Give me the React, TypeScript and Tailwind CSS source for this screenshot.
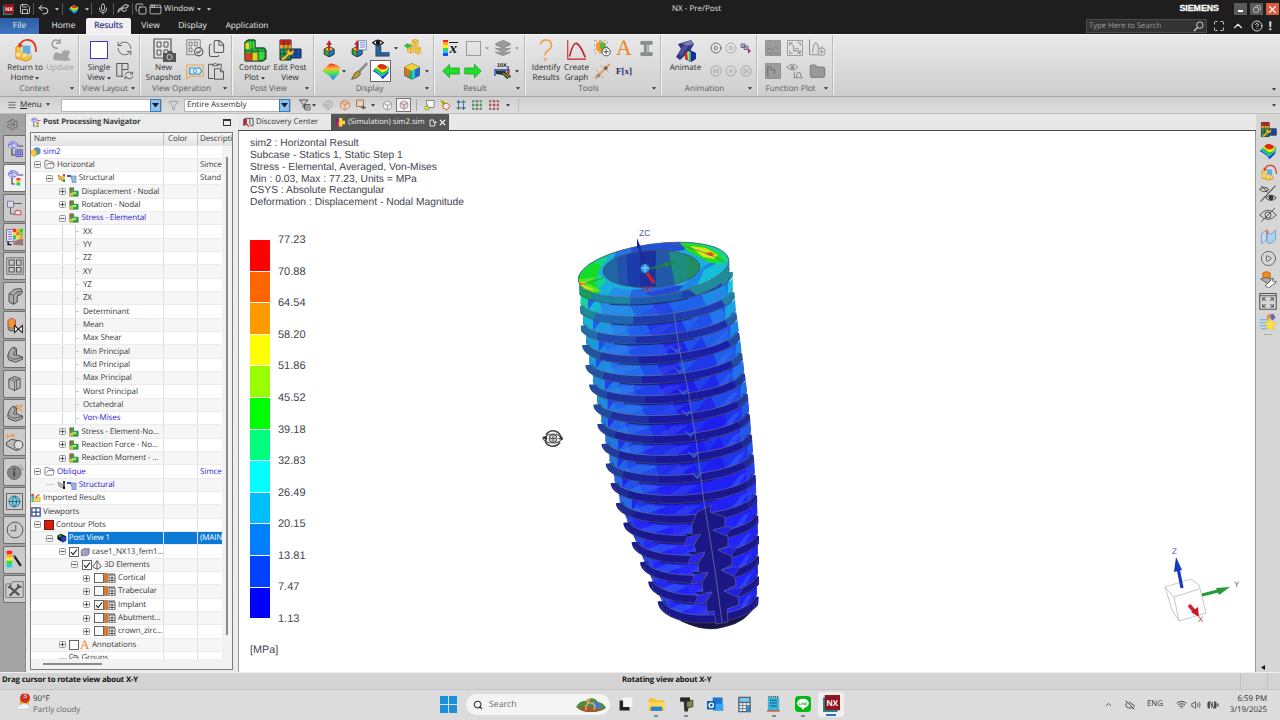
import type { ReactNode } from "react";
import clsx from "clsx";
import {
  Save, Undo2, Mic, Search, Maximize, ChevronUp, CircleHelp, Settings, RefreshCw, Files,
  Layers, CirclePlay, CircleStop, CirclePause, Folder,
  Filter, Wifi, Volume2, Globe, Box, Copy, AppWindow,
  BatteryCharging, CloudOff, Package, Magnet, Pyramid, FolderOpen,
} from "lucide-react";

const RAINBOW = [
  "#ff0000", "#ff6600", "#ff9900", "#ffff00", "#99ff00", "#00ff00",
  "#00ff80", "#00ffff", "#00bfff", "#0080ff", "#0040ff", "#0000ff",
];
const LEVELS = ["77.23", "70.88", "64.54", "58.20", "51.86", "45.52", "39.18", "32.83", "26.49", "20.15", "13.81", "7.47", "1.13"];

/* ---------- small drawings ---------- */

function Svg({ s = 20, children }: { s?: number; children: ReactNode }) {
  return <svg width={s} height={s} viewBox="0 0 24 24" fill="none" className="shrink-0">{children}</svg>;
}

function Caret({ dim = false, light = false }: { dim?: boolean; light?: boolean }) {
  return (
    <svg width="4" height="3" viewBox="0 0 4 3" className="shrink-0">
      <path d="M0 .3h4L2 2.6z" fill={light ? "#ddd" : dim ? "#9a9a9a" : "#222"} />
    </svg>
  );
}

const Contour = ({ s = 20 }: { s?: number }) => (
  <Svg s={s}>
    <path d="M1 12 11 3q6 0 12 5-2 5-1 7l-8 8q-2-5-13-11z" fill="#1a35d8" />
    <path d="M2 11 11 3q6 0 12 5-2 3-1.500 5-5 5-9 7-2-4-10.500-9z" fill="#18c8d8" />
    <path d="M3 10 11 3q6 0 12 5-2 2-1.500 3-4 5-9 6-2-4-9.500-7z" fill="#23c823" />
    <path d="M5 8q3-5 8-5 6 1 9 5-2 5-9 6-2-3-8-6z" fill="#f5e51b" />
    <path d="M7 6q3-4 7-3 5 1 6 4-1 3-7 3-3-1-6-4z" fill="#e32a14" />
  </Svg>
);

const SmoothContour = () => (
  <Svg s={20}>
    <defs>
      <linearGradient id="smooth" x1="0.500" y1="0" x2=".55" y2="1">
        <stop offset="0.050" stopColor="#f33" /><stop offset=".3" stopColor="#fb3" />
        <stop offset=".55" stopColor="#5e4" /><stop offset=".9" stopColor="#28f" />
      </linearGradient>
    </defs>
    <path d="M1 12 11 3q6 0 12 5-2 5-1 7l-8 8q-2-5-13-11z" fill="url(#smooth)" />
  </Svg>
);

const PaintBrush = () => (
  <Svg s={18}>
    <path d="M22 1 11 12l2 2L23 3z" fill="#9a9a9a" stroke="#555" strokeWidth=".8" />
    <path d="M11 12l3 3q-1 6-12 8 2-3 3-6t6-5z" fill="#b59a3c" stroke="#4e4520" />
  </Svg>
);

const ContourPlot = ({ s = 24 }: { s?: number }) => (
  <Svg s={s}>
    <path d="M2 4l3-2h7v8h9l2 2v9l-3 2H2z" fill="#28b83a" stroke="#222" />
    <path d="M2 5h4v6H2z" fill="#f5d020" /><path d="M2 15h7v8H2z" fill="#e8381c" />
    <path d="M7 4h5v6H7z" fill="#4ede38" /><path d="M9 15h6v8H9z" fill="#f5c71c" />
    <path d="M16 12h6v9h-6z" fill="#3ed23e" />
    <path d="M2 13h20M9 4v19M15 11v12M2 22V4l3-2h7v8h10v10l-2 3H2" stroke="#163" strokeWidth=".9" />
  </Svg>
);

const EditPost = ({ s = 24 }: { s?: number }) => (
  <Svg s={s}>
    <path d="M2 2h11v20H2z" fill="#1d9b58" stroke="#223" />
    <path d="M2 2h11v5H2z" fill="#d3241c" /><path d="M2 7h11v4H2z" fill="#e2a722" />
    <path d="M13 11h10v9H13z" fill="#1d4fb8" stroke="#123" />
    <path d="M6 2v20M10 2v20M2 11h11M2 16h21M18 11v9" stroke="#133" strokeWidth=".7" />
    <path d="M3 21l6-5q-1-4 2-5l1 3 2-1v-2q3 2 1 5-2 2-4 1l-6 6z" fill="#f4c430" stroke="#8a5a00" strokeWidth=".7" />
  </Svg>
);

const ReturnHome = ({ s = 24 }: { s?: number }) => (
  <Svg s={s}>
    <path d="M3 9l5-3 4 2v5l6 1v7l-5 2-10-3z" fill="#f7c948" stroke="#d58b12" />
    <path d="M9 7h9v10H9z" fill="#5fb0dc" stroke="#e6eef4" />
    <path d="M3 14h5v5H3zM9 15h5v5H9z" fill="#ffe28a" stroke="#d99a2b" strokeWidth=".6" />
    <path d="M6 8Q9 1 16 2t7 12" stroke="#e0392b" strokeWidth="1.800" />
    <path d="M5 5l1 5 4-2z" fill="#e0392b" />
  </Svg>
);

const Cube = ({ s = 20 }: { s?: number }) => (
  <Svg s={s}>
    <path d="M12 2 22 7v11l-10 5-10-5V7z" fill="#25b35a" stroke="#222" strokeWidth=".7" />
    <path d="M12 2 22 7l-10 5L2 7z" fill="#f6cf2f" /><path d="M2 7l6 3v10l-6-3z" fill="#ee6a1f" />
    <path d="M12 12l10-5v11l-10 5z" fill="#1d68d6" /><path d="M12 12l4-2v11l-4 2z" fill="#23c7c7" />
  </Svg>
);

const ArrowCube = ({ list = false }: { list?: boolean }) => (
  <Svg s={17}>
    <path d="M10 9l7 4v7l-7 4-7-4v-7z" fill="#36a350" stroke="#111" />
    <path d="M10 9l7 4-7 4-7-4z" fill="#f0c52b" stroke="#111" strokeWidth=".7" />
    <path d="M10 17l7-4v7l-7 4z" fill="#2277c8" stroke="#111" strokeWidth=".7" />
    <path d="M10 15V5" stroke="#b3202a" strokeWidth="2.500" /><path d="M10 0l4 7H6z" fill="#c4232e" />
    {list && <><path d="M12 1h11v13H12z" fill="#f4f6ff" stroke="#4660b0" /><path d="M14 4h7M14 7h7M14 10h7" stroke="#4660b0" /></>}
  </Svg>
);

const EyePart = () => (
  <Svg s={18}>
    <path d="M5 9h7v9h11v5H5z" fill="#27619e" stroke="#123" strokeWidth=".6" />
    <path d="M1 5q7-7 14 0-7 7-14 0z" fill="#fff" stroke="#111" strokeWidth="1.500" /><circle cx="8" cy="5" r="3" fill="#111" />
  </Svg>
);

const YellowCubes = () => (
  <Svg s={18}>
    {[[12, 2], [6, 11], [16, 12]].map(([x, y]) => (
      <g key={x} stroke="#c98a14" strokeWidth=".7">
        <path d={`M${x} ${y}l4-2 4 2v6l-4 2-4-2z`} fill="#f7cf4b" /><path d={`M${x} ${y}l4 2 4-2M${x + 4} ${y + 2}v6`} />
      </g>
    ))}
    <path d="M1 9l6-4v2h4v4H7v2z" fill="#39b54a" />
  </Svg>
);

const Snapshot = () => (
  <Svg s={24}>
    <path d="M2 1h17v19H2z" stroke="#555" strokeWidth="1.200" />
    <path d="M5 4h4v5H5zM12 4h4v5h-4zM5 12h4v5H5zM12 12h4v5h-4z" stroke="#555" />
    <path d="M11 15h4l1-2h4l1 2h3v9H11z" fill="#555" /><circle cx="17.500" cy="19" r="2.600" stroke="#ccc" />
  </Svg>
);

const GridCheck = () => (
  <Svg s={18}>
    <path d="M1 1h18v20H1z" stroke="#666" /><path d="M4 4h4v5H4zM11 4h4v5h-4zM4 12h4v5H4z" stroke="#666" />
    <circle cx="17" cy="17" r="5.500" fill="#ddd" stroke="#555" strokeWidth="1.500" /><path d="M14 17l2 2 4-4" stroke="#555" strokeWidth="1.500" />
  </Svg>
);

const PhotoTag = () => (
  <Svg s={18}>
    <path d="M1 4h22v15H7l-6 3z" stroke="#f0a35a" strokeWidth="1.500" />
    <path d="M5 8h13l3 4-3 4H5z" fill="#def" stroke="#2a91b9" strokeWidth="1.500" /><circle cx="12" cy="12" r="2.300" stroke="#2a91b9" />
  </Svg>
);

const PasteIcon = () => (
  <Svg s={18}>
    <path d="M8 3H2v19h7M14 3h5v5" stroke="#555" strokeWidth="1.300" /><path d="M7 5V3h2q2-3 4 0h2v2z" stroke="#555" strokeWidth="1.200" />
    <path d="M10 9h8l4 4v10H10zM18 9v4h4" stroke="#555" strokeWidth="1.300" />
  </Svg>
);

const LayoutSync = () => (
  <Svg s={18}>
    <path d="M1 2h15v8M1 2v17h9M8 2v17M8 10h8" stroke="#555" strokeWidth="1.300" />
    <path d="M12 17q2-5 8-3l2 2M22 13v3h-3M23 19q-3 5-8 3l-2-2M12 23v-3h3" stroke="#555" strokeWidth="1.300" />
  </Svg>
);

const ColorbarX = () => (
  <div className="flex h-[17px] w-[17px] items-start gap-px">
    <div className="flex w-[5px] flex-col">
      {["#f22", "#fa2", "#fe2", "#3d3", "#2cd", "#24f"].map((c) => <div key={c} className="h-[2.700px]" style={{ backgroundColor: c }} />)}
    </div>
    <span className="mt-[2px] border-t border-[#222] px-px font-['Liberation_Serif'] text-[15px] font-bold italic leading-[13px] text-[#111]">x</span>
  </div>
);

const GreenArrow = ({ flip = false }: { flip?: boolean }) => (
  <Svg s={18}><path d={flip ? "M23 12 14 3v5H1v8h13v5z" : "M1 12l9-9v5h13v8H10v5z"} fill="#22dd2c" stroke="#159c20" /></Svg>
);

const TenX = () => (
  <svg width="20" height="20" viewBox="0 0 20 20" className="shrink-0">
    <text x="4" y="5.500" className="font-['Liberation_Sans'] text-[5.500px] font-bold" fill="#111">10X</text>
    <path d="M2 8v7M2 9h13M15 5v8" stroke="#24a" strokeWidth="1.300" />
    <path d="M3 10h9q4 1 6 6l-4 2-4-4-7-1z" fill="#26352e" /><path d="M10 12l6 5M13 11l3 4" stroke="#dfc32b" /><path d="M16 8v4" stroke="#d22" strokeWidth="1.500" />
  </svg>
);

const Question = () => (
  <Svg s={22}>
    <path d="M6 6q1-5 6-5 6 0 6 6 0 3-3 5-4 2-4 6" stroke="#f39a44" strokeWidth="1.700" /><path d="M10 21h2.500v2.500H10z" fill="#f39a44" />
  </Svg>
);

const Graph = () => (
  <Svg s={21}><path d="M2 1v22h21" stroke="#c8202a" strokeWidth="1.200" /><path d="M4 20Q8 4 12 5t10 16" stroke="#c8202a" strokeWidth="1.800" /></Svg>
);

const PickPlus = () => (
  <Svg s={18}>
    <path d="M2 2h17v17H2z" stroke="#999" strokeDasharray="3 3" /><path d="M4 6l6-4 7 4v8l-7 5-6-5z" fill="#f29a2b" />
    <path d="M9 6l5-2 3 3v5l-5 3-3-4z" fill="#55b848" /><circle cx="17.500" cy="17" r="5.500" fill="#fff" stroke="#222" /><path d="M17.500 13.500v7M14 17h7" stroke="#222" />
  </Svg>
);

const Ruler = () => (
  <Svg s={18}>
    <path d="M3 22 22 3" stroke="#f08a34" strokeWidth="3" strokeDasharray="2.500 1" /><path d="M4 10l10 11M10 4l11 10" stroke="#e98a3c" />
    <circle cx="17" cy="8" r="2.500" fill="#666" /><circle cx="7" cy="18" r="2.500" fill="#888" />
  </Svg>
);

const IBeam = () => (
  <Svg s={17}><path d="M4 2h16v4h-5v12h5v4H4v-4h5V6H4z" fill="#8a8f8d" stroke="#70807a" /><path d="M12 6l3 1v10l-3 1z" fill="#bbb" /></Svg>
);

const Animate = () => (
  <Svg s={24}>
    <path d="M4 6 17 2l3 4-4 7-10 9-4-3 5-8z" fill="#33337e" /><path d="M8 6l9-4 3 4-6 2z" fill="#7b7bb4" />
    <path d="M4 16l5-8 6-1-7 11z" fill="#4f509b" />
    <path d="M11 15l5-3 6 3v6l-5 3-6-3z" fill="#182a98" /><path d="M11 15l3-1v8l-3-2z" fill="#e8262a" />
    <path d="M13 14l2-1 1 10-2-1z" fill="#e9d727" /><path d="M15 13l2 1v9h-2z" fill="#25b6a6" />
  </Svg>
);

const FilledPlot = ({ kind = 0 }: { kind?: number }) => (
  <Svg s={18}>
    <path d="M2 2h20v20H2z" fill={kind === 1 ? "none" : "#9b9b9b"} stroke="#868686" />
    {kind === 0 && <path d="M4 15l4-3 4 3 3-4 5 2M4 19h16" stroke="#777" />}
    {kind === 1 && <path d="M5 9V5h4M15 5h4v4M19 15v4h-4M9 19H5v-4M5 5l5 4M19 19l-4-4M10 9v7h8M12 15q0-4 5-2" stroke="#868686" strokeWidth="1.200" />}
    {kind === 2 && <path d="M5 5v14M5 7h6M8 10h6v6" stroke="#6f6f6f" strokeWidth="1.400" />}
  </Svg>
);

const CurvePlus = () => (
  <Svg s={18}>
    <path d="M2 1v20h20M6 18Q8 3 11 5t3 13M14 18q2-8 6-8" stroke="#8b8b8b" strokeWidth="1.300" />
    <circle cx="18" cy="17" r="5" fill="#ddd" stroke="#8b8b8b" /><path d="M18 14v6M15 17h6" stroke="#8b8b8b" />
  </Svg>
);

const EyeCurve = () => (
  <Svg s={18}>
    <path d="M1 7q8-8 15 0-7 7-15 0z" stroke="#8b8b8b" strokeWidth="1.300" /><circle cx="8.500" cy="7" r="2.500" fill="#8b8b8b" />
    <path d="M11 13v8h12M14 20q0-6 3-6t3 6" stroke="#8b8b8b" strokeWidth="1.400" />
  </Svg>
);

const UpdateIcon = () => (
  <Svg s={24}>
    <path d="M11 3Q5 0 4 6q1 5 6 4M12 1v4H8" stroke="#9b9b9b" strokeWidth="1.500" />
    <path d="M6 22q-2-5 2-8l5 2 3-4 4 1v-2l2 3-2 5 3 3-5 1z" fill="#a5a5a5" />
  </Svg>
);

const GeoMesh = ({ color = false, s = 18 }: { color?: boolean; s?: number }) => (
  <Svg s={s}>
    <path d="M3 7q1-5 6-5t7 4q-1 4-6 5T3 7zM3 7q6-4 13-1M8 2q-3 4 2 9" fill="#d4d4fb" stroke="#6d6dd8" strokeWidth="1.200" />
    <path d="M8 12v8h4M16 8h7" stroke="#444" strokeWidth="1.600" />
    {color ? <><path d="M14 12h5v4h-5z" fill="#f33" /><path d="M14 15h5v3h-5z" fill="#fd2" /><path d="M14 18h5v4h-5z" fill="#2c6" /></>
      : <path d="M13 13h9v9h-9zM16 13v9M19 13v9M13 16h9M13 19h9" stroke="#5252c8" strokeWidth="1.200" />}
  </Svg>
);

const HeatGrid = () => (
  <Svg s={19}>
    <path d="M2 2h9v15H2z" fill="#eef" stroke="#557" /><path d="M4 5h5M4 8h5M4 11h5M4 14h5" stroke="#44c" />
    {["#f22", "#fa1", "#3c2", "#fd2", "#f62", "#6d2", "#2c5", "#ee2", "#f93"].map((c, i) => (
      <rect key={c + i} x={10 + (i % 3) * 4.3} y={1 + Math.floor(i / 3) * 4.3} width="4" height="4" fill={c} />
    ))}
    <path d="M10 21q2-7 13-7v8z" fill="#9c7777" /><path d="M4 17v4h4" stroke="#111" strokeWidth="1.800" />
  </Svg>
);

const FourViews = () => (
  <Svg s={18}><path d="M1 1h22v22H1z" stroke="#666" strokeWidth="1.200" /><path d="M4 4h7v7H4zM14 4h6v7h-6zM4 14h7v6H4zM14 14h6v6h-6z" stroke="#555" strokeWidth="1.400" /></Svg>
);

const Bracket = () => (
  <Svg s={18}>
    <path d="M4 9l7-6 9-1 2 4-2 4-5 2v8l-5 3-6-3z" fill="#aaa" stroke="#444" strokeWidth="1.200" />
    <path d="M4 9l6 2v12M10 11l5-5 6 0" stroke="#444" /><circle cx="16" cy="8" r="1.500" fill="#eee" stroke="#555" />
  </Svg>
);

const Elbow = ({ dots = false }: { dots?: boolean }) => (
  <Svg s={18}>
    <path d="M3 12Q6 3 11 3l3 2v8l8 3v3l-9 4-9-3q-3-4-1-8z" fill="#aaa" stroke="#444" strokeWidth="1.200" />
    <path d="M3 14q3 5 9 5l10-3M11 3q3 5-1 10l4 1" stroke="#444" />
    {dots && <path d="M13 2l9 8M21 2l-7 8M13 2h9" stroke="#f39334" strokeWidth="1.600" strokeDasharray="3 1" />}
  </Svg>
);

const CylMesh = () => (
  <Svg s={19}>
    <path d="M4 6v11q5 4 9 0V6z" fill="#9d9d9d" stroke="#444" /><path d="M4 5q5-4 9 0v9q-5 3-9 0z" fill="#f59530" stroke="#a55" />
    <path d="M12 12l10 9v-9l-10 9z" fill="#fff" stroke="#222" strokeWidth="1.300" />
  </Svg>
);

const Brackets = () => (
  <Svg s={17}><path d="M4 6l8-4 8 3v13l-8 4-8-4z" fill="#bbb" stroke="#444" strokeWidth="1.200" /><path d="M4 6l8 3v13M12 9l8-4M8 4l8 3M15 8v12" stroke="#444" /></Svg>
);

const Rings = () => (
  <Svg s={19}>
    <path d="M2 12l6-4 10 2v11l-4 1-12-6z" fill="#bbb" stroke="#444" strokeWidth="1.200" /><circle cx="17" cy="15" r="5.500" fill="#ddd" stroke="#444" strokeWidth="1.200" />
    <path d="M3 5l8-3M3 2v5M11 1v5" stroke="#f39334" strokeWidth="1.500" />
  </Svg>
);

const TreeLinks = () => (
  <Svg s={18}>
    <path d="M2 3h8v8H2z" fill="#dde" stroke="#669" /><path d="M10 6h11M6 11v9h5M11 20h3" stroke="#555" strokeWidth="1.200" />
    <path d="M12 21q-1-6 4-6t4 6z" stroke="#c55" strokeWidth="1.400" fill="#f7dede" />
  </Svg>
);

const InfoBall = () => (
  <Svg s={18}>
    <circle cx="11" cy="13" r="9" fill="#858585" stroke="#555" /><path d="M11 11v7M11 7v2.500" stroke="#444" strokeWidth="2.500" />
    <path d="M18 2q5 2 5 8M17 5q3 1 4 5" stroke="#888" />
  </Svg>
);

const ClockFace = () => <Svg s={18}><circle cx="12" cy="12" r="10.500" stroke="#555" strokeWidth="1.300" /><path d="M13 5v8H6" stroke="#555" strokeWidth="1.300" /></Svg>;

const BarBrush = () => (
  <Svg s={19}>
    {["#f22", "#fa2", "#fe2", "#3d3", "#2cd"].map((c, i) => <rect key={c} x="2" y={1 + i * 4.2} width="7" height="4.200" fill={c} />)}
    <path d="M12 8l8 12" stroke="#222" strokeWidth="3" /><path d="M10 6l3 1-1 3z" fill="#555" />
  </Svg>
);

const Toolbox = () => (
  <Svg s={19}>
    <path d="M1 5h7l2-3h13v20H1z" stroke="#666" /><path d="M5 8l13 11M19 7 6 20" stroke="#555" strokeWidth="2.800" />
    <path d="M4 10l4-4M16 5l1 4 4 0" stroke="#555" strokeWidth="2" />
  </Svg>
);

const DotGrid = ({ red = true }: { red?: boolean }) => (
  <Svg s={12}>
    <path d="M4 4h16v16H4zM12 4v16M4 12h16" stroke={red ? "#977" : "#3a6"} strokeWidth="1.500" />
    {[4, 12, 20].map((x) => [4, 12, 20].map((y) => <rect key={`${x}-${y}`} x={x - 1.5} y={y - 1.5} width="3" height="3" fill={red || x === 12 ? "#b3242b" : "#3f7a55"} />))}
  </Svg>
);

const Swoosh = () => (
  <Svg s={12}><path d="M2 2h8l4 8-8 3z" fill="#f6d537" /><path d="M2 2l8 4 4 4-4 2z" fill="#35b44a" /><path d="M8 12q8-8 14 2l-6 8-8-4z" fill="#f2ede8" stroke="#e2592b" strokeWidth="2" /></Svg>
);

const FourDots = () => (
  <Svg s={12}><path d="M3 6h18M3 18h18M7 2v20M17 2v20" stroke="#334e9c" strokeWidth="1.500" /><path d="M5 4h4v4H5zM15 16h4v4h-4z" fill="#26a" /><path d="M15 4h4v4h-4zM5 16h4v4H5z" fill="#3a9b52" /></Svg>
);

const SquareTarget = () => (
  <Svg s={12}><path d="M3 2h14v13H3z" stroke="#c9702c" strokeWidth="2" /><path d="M17 12v9M12 17h10" stroke="#555" strokeWidth="2.500" /></Svg>
);

const StarBadge = () => (
  <Svg s={18}>
    <path d="M1 9h12M1 13h9M1 17h9M3 21h8" stroke="#7fbbe8" strokeWidth="2.200" /><path d="M11 3l8-2 3 5-4 4z" fill="#6a5fc0" /><circle cx="13" cy="5" r="3" fill="#f0913a" />
    <path d="M15 7l2.500 5 5.500 1-4 4 1 6-5-3-5 3 1-6-4-4 5.500-1z" fill="#ffe14a" stroke="#e3b520" strokeWidth=".7" />
  </Svg>
);

const Panels = () => (
  <Svg s={17}><path d="M2 8l7-5v14l-7 5z" fill="#c9d6f4" stroke="#7287bd" /><path d="M10 7l5 2 7-6v13l-7 6-5-2z" fill="#a9d3f5" stroke="#6c87b8" /><path d="M9 1l4 5-4 3z" fill="#d68446" /></Svg>
);

const OrangeTool = () => (
  <Svg s={18}><path d="M5 4q5-4 10 0v6q-5 3-10 0z" fill="#f58b22" stroke="#b35c0c" /><path d="M2 12l8-2 9 3-8 5z" fill="#aaa" stroke="#555" /><path d="M8 21l7-6q0-4 4-4l-1 3 2 2 3-1q0 4-4 4l-6 5z" fill="#fff" stroke="#444" /></Svg>
);

const FitWindow = () => (
  <Svg s={18}><path d="M1 2h22v21H1zM1 5h22" stroke="#555" strokeWidth="1.400" /><path d="M5 12V8h4M15 8h4v4M19 16v4h-4M9 20H5v-4M5 8l4 4M19 8l-4 4M19 20l-4-4M5 20l4-4" stroke="#444" strokeWidth="1.300" /></Svg>
);

const HideSwap = () => (
  <Svg s={18}>
    <path d="M1 6q6-6 12 0-6 6-12 0zM3 1l9 9" stroke="#555" strokeWidth="1.400" /><path d="M2 22 22 1" stroke="#444" strokeWidth="1.400" />
    <path d="M9 17q7-7 14 0-7 7-14 0z" stroke="#444" strokeWidth="1.300" /><circle cx="16" cy="17" r="3.200" fill="#333" />
  </Svg>
);

const HideEye = () => (
  <Svg s={18}><path d="M1 12q11-13 22 0-11 12-22 0z" stroke="#555" strokeWidth="1.300" /><circle cx="12" cy="12" r="4" stroke="#555" strokeWidth="1.300" /><path d="M3 21 21 3" stroke="#555" strokeWidth="1.300" /></Svg>
);

const NxLogo = ({ s = 11 }: { s?: number }) => (
  <svg width={s} height={s} viewBox="0 0 20 20" className="shrink-0">
    <path d="M0 3h17v17H0z" fill="#1d8f8c" /><path d="M2 0h18v18H2z" fill="#8f1620" />
    <text x="4" y="13" className="font-['Liberation_Sans'] text-[10px] font-bold" fill="#fff">NX</text>
  </svg>
);

/* ---------- title bar + tabs ---------- */

const Sep = () => <div className="h-3 w-px shrink-0 bg-[#555]" />;

function TitleBar() {
  return (
    <div className="flex h-[18px] items-center bg-[#1e1e1e] text-[#e2e2e2]">
      <div className="flex w-[16px] justify-center"><NxLogo s={11} /></div>
      <div className="flex w-[17px] justify-center"><Save size={12} strokeWidth={1.6} /></div>
      <Sep />
      <div className="flex w-[18px] justify-center"><Undo2 size={13} strokeWidth={1.8} /></div>
      <div className="flex w-[10px] justify-center"><Caret light /></div>
      <Sep />
      <div className="flex w-[20px] justify-center"><Contour s={11} /></div>
      <div className="flex w-[8px] justify-center"><Caret light /></div>
      <Sep />
      <div className="flex w-[21px] justify-center"><Mic size={12} strokeWidth={1.6} /></div>
      <Sep />
      <div className="flex w-[18px] justify-center">
        <Svg s={12}><path d="M2 16q2-7 8-6h8q4 0 5-5-5-3-10 0t-3 10q5 5 10-2M1 19l7-6" stroke="#ddd" strokeWidth="2" /></Svg>
      </div>
      <Sep />
      <div className="flex w-[15px] justify-center"><Copy size={12} strokeWidth={1.6} /></div>
      <div className="flex w-[15px] justify-center"><AppWindow size={13} strokeWidth={1.4} /></div>
      <span className="w-[33px] pl-px text-[8px]">Window</span>
      <div className="flex w-[6px] justify-center"><Caret light /></div>
      <div className="flex w-[14px] justify-center"><Caret light /></div>
      <span className="ml-[456px] w-[60px] text-[8px]">NX - Pre/Post</span>
      <span className="ml-auto mr-[15px] font-['Liberation_Sans'] text-[8.800px] font-bold text-white [-webkit-text-stroke:0.300px_white]">SIEMENS</span>
      <div className="flex gap-[3px] pr-[1px]">
        <div className="flex h-[12px] w-[13px] items-end justify-center bg-[#5a5a5a] pb-[3px]"><div className="h-[2px] w-[5px] bg-white" /></div>
        <div className="flex h-[12px] w-[13px] items-center justify-center bg-[#5a5a5a]"><Copy size={8} className="-scale-x-100" /></div>
        <div className="flex h-[12px] w-[13px] items-center justify-center bg-[#dc5a3e]">
          <Svg s={9}><path d="M3 3l18 18M21 3 3 21" stroke="#fff" strokeWidth="3.500" /></Svg>
        </div>
      </div>
    </div>
  );
}

function RibbonTabs() {
  return (
    <div className="flex h-[16px] items-stretch bg-[#1e1e1e] text-[8.500px] leading-[16px] text-[#e8e8e8]">
      <div className="w-[39px] bg-gradient-to-b from-[#2c5ea4] to-[#3f76bf] text-center">File</div>
      <div className="w-[47px] pl-[2px] text-center">Home</div>
      <div className="w-[45px] rounded-t-[2px] bg-[#f1f1f4] text-center text-[#27277c] [-webkit-text-stroke:0.2px_#27277c]">Results</div>
      <div className="w-[39px] text-center">View</div>
      <div className="w-[45px] text-center">Display</div>
      <div className="w-[64px] text-center text-[8.200px]">Application</div>
      <div className="ml-auto flex h-[14px] w-[121px] items-center justify-between self-center border border-[#4c4c4c] bg-[#333] px-[2px] text-[7.700px] text-[#9d9d9d]">
        <span>Type Here to Search</span>
        <Svg s={11}><circle cx="15" cy="9" r="7" stroke="#ddd" strokeWidth="2" /><path d="M10 14l-8 8" stroke="#ddd" strokeWidth="2.800" /></Svg>
      </div>
      <div className="flex w-[73px] items-center justify-between pl-[6px] pr-[8px]">
        <Maximize size={12} strokeWidth={1.8} />
        <ChevronUp size={14} strokeWidth={2} />
        <CircleHelp size={12} strokeWidth={1.8} />
        <span className="text-[12px] font-bold leading-none">!</span>
      </div>
    </div>
  );
}

/* ---------- ribbon ---------- */

function Big({ className, icon, lines, dim }: { className: string; icon: ReactNode; lines: ReactNode[]; dim?: boolean }) {
  return (
    <div className={clsx("flex shrink-0 flex-col items-center", className, dim && "text-[#a2a2a2]")}>
      <div className="flex h-[27px] items-center justify-center">{icon}</div>
      {lines.map((l, i) => <div key={i} className="flex h-[10px] items-center gap-[2px] whitespace-nowrap leading-[10px]">{l}</div>)}
    </div>
  );
}

function Pair({ className, top, bottom }: { className: string; top?: ReactNode; bottom?: ReactNode }) {
  return (
    <div className={clsx("flex shrink-0 flex-col", className)}>
      <div className="flex h-[24px] items-center justify-center">{top}</div>
      <div className="flex h-[22px] items-center justify-center">{bottom}</div>
    </div>
  );
}

function Group({ className, label, children }: { className: string; label: string; children: ReactNode }) {
  return (
    <div className={clsx("flex shrink-0 flex-col border-r border-[#f4f4f4] shadow-[-1px_0_0_#b9b9b9_inset]", className)}>
      <div className="flex h-[49px] pl-px pt-[1px]">{children}</div>
      <div className="relative flex h-[11px] items-center justify-center pr-[10px] text-[8.200px] text-[#5b5b5b]">
        <span className="whitespace-nowrap">{label}</span>
        <span className="absolute right-[5px] top-[3px] flex"><Caret /></span>
      </div>
    </div>
  );
}

const Circled = ({ d }: { d: string }) => (
  <Svg s={12}><circle cx="12" cy="12" r="10.500" stroke="#999" strokeWidth="1.500" /><path d={d} stroke="#999" strokeWidth="1.500" /></Svg>
);

function Ribbon() {
  return (
    <div className="flex h-[62px] border-t border-[#f6f6f6] bg-gradient-to-b from-[#e9e9e9] to-[#cdcdcd] text-[8.100px] text-[#2a2a2a]">
      <div className="flex h-[60px]">
        <Group className="w-[80px]" label="Context">
          <Big className="ml-[4px] w-[40px]" icon={<ReturnHome />} lines={["Return to", <>Home <Caret /></>]} />
          <Big className="w-[30px]" dim icon={<UpdateIcon />} lines={["Update"]} />
        </Group>
        <Group className="w-[61px]" label="View Layout">
          <Big className="w-[36px]" icon={<div className="h-[18px] w-[18px] border border-[#3939b9] bg-white" />} lines={["Single", <>View <Caret /></>]} />
          <Pair className="w-[15px]" top={<RefreshCw size={17} strokeWidth={1.2} color="#555" className="shrink-0 -scale-x-100" />} bottom={<LayoutSync />} />
        </Group>
        <Group className="w-[92px]" label="View Operation">
          <Big className="w-[43px]" icon={<Snapshot />} lines={["New", "Snapshot"]} />
          <Pair className="w-[20px]" top={<GridCheck />} bottom={<PhotoTag />} />
          <Pair className="w-[22px]" top={<Files size={19} strokeWidth={1.3} color="#555" />} bottom={<PasteIcon />} />
        </Group>
        <Group className="w-[82px]" label="Post View">
          <Big className="w-[41px]" icon={<ContourPlot />} lines={["Contour", <>Plot <Caret /></>]} />
          <Big className="w-[30px]" icon={<EditPost />} lines={["Edit Post", "View"]} />
        </Group>
        <Group className="w-[120px]" label="Display">
          <Pair className="ml-[4px] w-[21px]" top={<ArrowCube />} bottom={<SmoothContour />} />
          <Pair className="w-[6px]" top={null} bottom={<Caret />} />
          <Pair className="w-[23px]" top={<ArrowCube list />} bottom={<PaintBrush />} />
          <Pair
            className="w-[21px]"
            top={<EyePart />}
            bottom={<div className="flex h-[22px] w-[21px] shrink-0 items-center justify-center border border-[#666] bg-white"><Contour s={18} /></div>}
          />
          <Pair className="w-[9px]" top={<Caret />} />
          <Pair className="w-[23px]" top={<YellowCubes />} bottom={<Cube s={18} />} />
          <Pair className="w-[8px]" bottom={<Caret />} />
        </Group>
        <Group className="w-[91px]" label="Result">
          <Pair className="ml-[4px] w-[22px]" top={<ColorbarX />} bottom={<GreenArrow />} />
          <Pair className="w-[22px]" top={<div className="h-[15px] w-[15px] border border-[#9c9c9c]" />} bottom={<GreenArrow flip />} />
          <Pair className="w-[5px]" top={<Caret dim />} />
          <Pair className="ml-[3px] w-[22px]" top={<Layers size={18} fill="#999" color="#888" strokeWidth={1.2} />} bottom={<TenX />} />
          <Pair className="w-[5px]" top={<Caret dim />} bottom={<Caret />} />
        </Group>
        <Group className="w-[136px]" label="Tools">
          <Big className="ml-[3px] w-[32px]" icon={<Question />} lines={["Identify", "Results"]} />
          <Big className="w-[29px]" icon={<Graph />} lines={["Create", "Graph"]} />
          <Pair className="w-[22px]" top={<PickPlus />} bottom={<Ruler />} />
          <Pair
            className="w-[22px]"
            top={<span className="font-['Liberation_Serif'] text-[22px] leading-none text-[#f08323]">A</span>}
            bottom={<span className="font-['Liberation_Serif'] text-[9px] font-bold leading-none text-[#26266e]">F[x]</span>}
          />
          <Pair className="w-[22px]" top={<IBeam />} />
        </Group>
        <Group className="w-[96px]" label="Animation">
          <Big className="w-[45px]" icon={<Animate />} lines={["Animate"]} />
          <Pair className="w-[15px]" top={<CirclePlay size={12} strokeWidth={1.6} color="#555" />} bottom={<Circled d="M16 7l-6 5 6 5zM8 7v10" />} />
          <Pair className="w-[15px]" top={<CircleStop size={12} strokeWidth={1.5} color="#999" />} bottom={<CirclePause size={12} strokeWidth={1.5} color="#999" />} />
          <Pair className="w-[15px]" top={<Svg s={12}><path d="M2 4h8v7H2zM8 8h8v7H8z" fill="#aac" stroke="#557" strokeWidth="1.500" /><path d="M16 13v10l6-5z" fill="#a2226f" /></Svg>} bottom={<Circled d="M8 7l6 5-6 5zM16 7v10" />} />
        </Group>
        <Group className="w-[76px]" label="Function Plot">
          <Pair className="ml-[3px] w-[22px]" top={<FilledPlot />} bottom={<FilledPlot kind={2} />} />
          <Pair className="w-[22px]" top={<FilledPlot kind={1} />} bottom={<EyeCurve />} />
          <Pair className="w-[22px]" top={<CurvePlus />} bottom={<Folder size={17} fill="#999" color="#888" />} />
        </Group>
      </div>
      <div className="ml-auto self-end pb-[5px] pr-[4px]"><Caret /></div>
    </div>
  );
}

function Combo({ className, text }: { className: string; text?: string }) {
  return (
    <div className={clsx("flex h-[13px] items-center justify-between border border-[#b5b5b5] bg-white pl-[2px] text-[8px] text-[#333]", className)}>
      <span>{text}</span>
      <span className="flex h-[13px] w-[11px] items-center justify-center border border-[#3b78b8] bg-[#8fc0ec]">
        <svg width="7" height="5" viewBox="0 0 7 5"><path d="M0 0h7L3.500 4.500z" fill="#0d1d38" /></svg>
      </span>
    </div>
  );
}

function SelectionBar() {
  return (
    <div className="flex h-[18px] items-center border-y border-t-[#a4a4a4] border-b-[#bcbcbc] bg-gradient-to-b from-[#cfcfcf] to-[#dedede] text-[8.100px] text-[#2a2a2a]">
      <div className="flex w-[53px] items-center gap-[4px] pl-[8px]">
        <Svg s={8}><path d="M1 4h22M1 12h22M1 20h22" stroke="#555" strokeWidth="2.500" /></Svg>
        <span><span className="underline">M</span>enu</span>
        <Caret />
      </div>
      <Combo className="ml-[8px] w-[101px]" />
      <div className="flex w-[22px] justify-center"><Filter size={11} color="#888" strokeWidth={1.5} /></div>
      <Combo className="w-[107px]" text="Entire Assembly" />
      <div className="ml-[6px] flex w-[15px] justify-center">
        <Svg s={12}><path d="M1 2h17l-7 8v9l-3-3v-6z" stroke="#444" strokeWidth="1.800" /><path d="M12 11h10v11H12zM14 14h6M14 18h6" fill="#ddd" stroke="#444" strokeWidth="1.600" /></Svg>
      </div>
      <Caret />
      <div className="ml-[3px] flex w-[17px] justify-center"><Magnet size={11} color="#999" /></div>
      <div className="flex w-[17px] justify-center"><Package size={12} color="#df8c46" /></div>
      <div className="flex w-[16px] justify-center"><SquareTarget /></div>
      <div className="flex w-[7px] justify-center"><Caret /></div>
      <div className="flex w-[20px] justify-center pl-[3px]"><Box size={11} color="#999" fill="#eee" /></div>
      <div className="flex h-[14px] w-[15px] items-center justify-center border border-[#777] bg-[#f5f5f5]"><Box size={10} color="#b08080" fill="#ddd" /></div>
      <div className="ml-[5px] h-3 w-px bg-[#aaa]" />
      <div className="ml-[5px] flex w-[15px] justify-center"><Svg s={12}><path d="M4 3h16v14H8z" fill="#fff" stroke="#667" strokeWidth="1.500" /><path d="M2 14h8v8H2z" fill="#e9d33a" stroke="#4a4" /></Svg></div>
      <div className="flex w-[16px] justify-center"><Swoosh /></div>
      <div className="flex w-[16px] justify-center"><FourDots /></div>
      <div className="flex w-[16px] justify-center"><DotGrid red={false} /></div>
      <div className="flex w-[17px] justify-center"><DotGrid /></div>
      <div className="ml-[4px]"><Caret /></div>
      <div className="ml-[8px] h-3 w-px bg-[#bbb]" />
      <div className="ml-auto pr-[4px]"><Caret /></div>
    </div>
  );
}

/* ---------- resource bar + navigator ---------- */

const RESOURCE_TABS: ReactNode[] = [
  <GeoMesh />, <GeoMesh color />, <TreeLinks />, <HeatGrid />, <FourViews />, <Bracket />, <CylMesh />, <Elbow />,
  <Brackets />, <Elbow dots />, <Rings />, <InfoBall />,
  <div className="flex h-[17px] w-[17px] items-center justify-center border border-[#666]"><Globe size={13} color="#1c6f8c" fill="#8cc9da" strokeWidth={1.8} /></div>,
  <ClockFace />, <BarBrush />, <Toolbox />,
];

function ResourceBar() {
  return (
    <div className="flex w-[25px] shrink-0 flex-col items-end bg-[#a3a3a3] text-[#555]">
      <div className="flex h-[21px] w-[25px] shrink-0 items-center justify-center"><Settings size={13} strokeWidth={1.5} /></div>
      {RESOURCE_TABS.map((icon, i) => (
        <div
          key={i}
          className={clsx("mb-[1.350px] flex h-[28px] w-[22px] shrink-0 items-center justify-center rounded-l-[2px] border border-r-0 border-[#6f6f6f]", i === 1 ? "bg-[#f0f0f0]" : "bg-[#cbcbcb]")}
        >
          {icon}
        </div>
      ))}
    </div>
  );
}

const ResultIcon = () => (
  <Svg s={10}><path d="M2 2h9v8h11v12H2z" fill="#2fae45" stroke="#264" strokeWidth="1.500" /><path d="M2 3h5v6H2z" fill="#e8402a" /><path d="M2 14h8v8H2z" fill="#f2b52e" /><path d="M8 12h9v5H8z" fill="#9fe47c" /></Svg>
);
const StructIcon = ({ gray = false }: { gray?: boolean }) => (
  <svg width="20" height="10" viewBox="0 0 20 10" className="shrink-0">
    <path d="M1 2l6 3-2 3-3-2z" fill={gray ? "#bbb" : "#f1b43a"} stroke={gray ? "#777" : "#a73"} strokeWidth=".6" />
    <path d="M6 1h2v2.700H6z" fill={gray ? "#333" : "#e33"} /><path d="M6 3.700h2v2.600H6z" fill={gray ? "#666" : "#ed2"} /><path d="M6 6.300h2V9H6z" fill={gray ? "#111" : "#2a5"} />
    <path d="M10 2h4v2h-4z" fill="#2b5cc8" /><path d="M14 3h5v7h-4V6h-1z" fill="#9db8dc" stroke="#5679ae" strokeWidth=".6" />
  </svg>
);
const SimIcon = () => <Svg s={10}><path d="M8 3l8-2 6 4v10l-8 4-6-3z" fill="#5b95cf" stroke="#357" /><path d="M1 8l8-2 4 6v8l-6 3-6-4z" fill="#f5c83e" stroke="#b78015" /></Svg>;
const ImportIcon = () => <Svg s={10}><path d="M1 2h6v20H1z" fill="#2ec4d8" /><path d="M1 2h6v6H1z" fill="#e43" /><path d="M6 10h16v11H5z" fill="#f7cf52" stroke="#a8811a" /><path d="M12 12q2-8 9-8" stroke="#d33" strokeWidth="2.500" /></Svg>;
const ViewportsIcon = () => <Svg s={10}><path d="M2 2h20v20H2zM12 2v20M2 12h20" stroke="#334b90" strokeWidth="3" fill="#fff" /></Svg>;
const MeshIcon = () => (
  <svg width="12" height="10" viewBox="0 0 12 10" className="shrink-0"><path d="M0 0h4v10H0z" fill="#d47a35" /><path d="M5 2h6v8H5z" fill="#fff" stroke="#333" strokeWidth=".8" /><path d="M4 1h7M5.500 5h5M5.500 7.500h5M8 3v7" stroke="#333" strokeWidth=".8" /></svg>
);
const PlotCube = () => (
  <Svg s={10}><path d="M1 6l8-4 13 6v10l-8 5-13-8z" fill="#111" /><path d="M10 10l6-3 6 3v8l-7 4-5-3z" fill="#1c3fd0" /><path d="M3 6l6-3 3 4-5 5z" fill="#2c9a35" /></Svg>
);
const FemIcon = () => (
  <Svg s={10}><path d="M3 8l6-4h13v12l-5 5H3z" fill="#8c93d8" stroke="#4a56a8" strokeWidth="1.500" /><path d="M3 10h14v11M8 9v12M12 9v12" stroke="#e8b858" strokeWidth="1.500" /></Svg>
);

type Row = { text: string; level?: number; toggle?: "+" | "-" | "none"; icon?: ReactNode; check?: boolean; blue?: boolean; desc?: string; selected?: boolean; root?: boolean; leaf?: boolean };

const leaf = (text: string, blue = false): Row => ({ text, leaf: true, blue, level: 2 });

const ROWS: Row[] = [
  { text: "sim2", root: true, icon: <SimIcon />, blue: true },
  { text: "Horizontal", level: 0, toggle: "-", icon: <FolderOpen size={11} color="#555" strokeWidth={1.6} />, desc: "Simce" },
  { text: "Structural", level: 1, toggle: "-", icon: <StructIcon />, desc: "Stand" },
  { text: "Displacement - Nodal", level: 2, toggle: "+", icon: <ResultIcon /> },
  { text: "Rotation - Nodal", level: 2, toggle: "+", icon: <ResultIcon /> },
  { text: "Stress - Elemental", level: 2, toggle: "-", icon: <ResultIcon />, blue: true },
  leaf("XX"), leaf("YY"), leaf("ZZ"), leaf("XY"), leaf("YZ"), leaf("ZX"), leaf("Determinant"), leaf("Mean"), leaf("Max Shear"),
  leaf("Min Principal"), leaf("Mid Principal"), leaf("Max Principal"), leaf("Worst Principal"), leaf("Octahedral"), leaf("Von-Mises", true),
  { text: "Stress - Element-No...", level: 2, toggle: "+", icon: <ResultIcon /> },
  { text: "Reaction Force - No...", level: 2, toggle: "+", icon: <ResultIcon /> },
  { text: "Reaction Moment - ...", level: 2, toggle: "+", icon: <ResultIcon /> },
  { text: "Oblique", level: 0, toggle: "-", icon: <FolderOpen size={11} color="#555" strokeWidth={1.6} />, blue: true, desc: "Simce" },
  { text: "Structural", level: 1, toggle: "none", icon: <StructIcon gray />, blue: true },
  { text: "Imported Results", root: true, icon: <ImportIcon /> },
  { text: "Viewports", root: true, icon: <ViewportsIcon /> },
  { text: "Contour Plots", level: 0, toggle: "-", icon: <div className="h-[10px] w-[10px] border border-[#7d1410] bg-[#d81c0c]" /> },
  { text: "Post View 1", level: 1, toggle: "-", icon: <PlotCube />, selected: true, desc: "(MAIN" },
  { text: "case1_NX13_fem1...", level: 2, toggle: "-", check: true, icon: <FemIcon /> },
  { text: "3D Elements", level: 3, toggle: "-", check: true, icon: <Pyramid size={10} color="#444" /> },
  { text: "Cortical", level: 4, toggle: "+", check: false, icon: <MeshIcon /> },
  { text: "Trabecular", level: 4, toggle: "+", check: false, icon: <MeshIcon /> },
  { text: "Implant", level: 4, toggle: "+", check: true, icon: <MeshIcon /> },
  { text: "Abutment...", level: 4, toggle: "+", check: false, icon: <MeshIcon /> },
  { text: "crown_zirc...", level: 4, toggle: "+", check: false, icon: <MeshIcon /> },
  { text: "Annotations", level: 2, toggle: "+", check: false, icon: <span className="w-[10px] font-['Liberation_Serif'] text-[13px] leading-[13px] text-[#f08323]">A</span> },
  { text: "Groups", level: 2, toggle: "none", icon: <FolderOpen size={10} color="#555" /> },
];

const INDENT = ["pl-[2.500px]", "pl-[15.200px]", "pl-[27.900px]", "pl-[40px]", "pl-[52px]"];

function TreeRow({ row, odd }: { row: Row; odd: boolean }) {
  return (
    <div className={clsx("flex h-[13.340px] shrink-0 items-center border-b border-[#ececec]", odd ? "bg-[#f6f6f6]" : "bg-white")}>
      <div className={clsx("flex h-full w-[133px] shrink-0 items-center overflow-hidden whitespace-nowrap border-r border-[#e0e0e0]", row.root ? "pl-0" : INDENT[row.level ?? 0])}>
        {row.leaf && (
          <>
            <div className="ml-[3px] h-full w-[13px] border-l border-[#d4d4d4]" />
            <div className="mr-[2px] flex h-full w-[4px] items-center border-l border-[#cfcfcf]"><div className="h-px w-full bg-[#cfcfcf]" /></div>
          </>
        )}
        {row.toggle === "none" && <div className="mr-[2.500px] h-px w-[8px] bg-[#cfcfcf]" />}
        {(row.toggle === "+" || row.toggle === "-") && (
          <svg width="7" height="7" viewBox="0 0 7 7" className="mr-[3.500px] shrink-0">
            <rect x=".5" y=".5" width="6" height="6" rx="1" fill="#f4f4f4" stroke="#9a9a9a" />
            <path d={row.toggle === "+" ? "M1.500 3.500h4M3.500 1.500v4" : "M1.500 3.500h4"} stroke="#333" strokeWidth=".8" />
          </svg>
        )}
        {row.check !== undefined && (
          <svg width="10" height="10" viewBox="0 0 10 10" className="mr-[.5px] shrink-0">
            <rect x=".5" y=".5" width="9" height="9" fill="#fff" stroke="#555" strokeWidth=".9" />
            {row.check && <path d="M2 5l2 2.500L8 2.500" stroke="#222" fill="none" strokeWidth="1.200" />}
          </svg>
        )}
        {row.icon}
        <span className={clsx("flex h-full items-center", row.selected ? "ml-px flex-1 bg-[#0c79d4] pl-px text-white" : "pl-[2px]", row.blue && "text-[#2d20d0]")}>{row.text}</span>
      </div>
      <div className={clsx("h-full w-[34px] shrink-0 border-r border-[#e0e0e0]", row.selected && "bg-[#0c79d4]")} />
      <div className={clsx("flex h-full w-[24px] items-center overflow-hidden pl-[2px]", row.selected && "bg-[#0c79d4] text-white", row.blue && "text-[#2d20d0]")}>{row.desc}</div>
    </div>
  );
}

function Navigator() {
  return (
    <div className="flex w-[213px] shrink-0 flex-col border-l border-[#8a8a8a] bg-[#ececec] px-[4px] text-[8px] tracking-[-0.1px] text-[#3a3a3a]">
      <div className="flex h-[18px] shrink-0 items-center gap-[2px] pb-px">
        <GeoMesh color s={11} />
        <span className="text-[7.800px] font-bold tracking-[-0.16px]">Post Processing Navigator</span>
        <div className="ml-auto mr-[3px] h-[7px] w-[8px] border border-t-2 border-[#333]" />
      </div>
      <div className="flex h-[538px] w-[203px] flex-col border border-[#7d7d7d] bg-[#f2f2f2]">
        <div className="flex h-[12.500px] shrink-0 items-center bg-gradient-to-b from-[#f6f6f6] to-[#e2e2e2] leading-[12px]">
          <span className="w-[133px] shrink-0 border-r border-[#bbb] pl-[3px]">Name</span>
          <span className="w-[34px] shrink-0 border-r border-[#bbb] pl-[4px]">Color</span>
          <span className="pl-[2px]">Descripti</span>
        </div>
        <div className="flex h-[513.500px]">
          <div className="flex w-[191px] flex-col overflow-hidden">
            {ROWS.map((row, i) => <TreeRow key={i} row={row} odd={i % 2 === 1} />)}
          </div>
          <div className="ml-[4px] mt-[11px] h-[478px] w-[2px] bg-[#8a8a8a]" />
        </div>
        <div className="ml-[12px] mt-[4px] h-[2px] w-[59px] bg-[#8a8a8a]" />
      </div>
    </div>
  );
}

/* ---------- stress model ---------- */

type Pt = [number, number];

const LEFT_EDGE: Pt[] = [[290, 578], [330, 583], [375, 590], [427, 601], [470, 610], [512, 621], [552, 638], [590, 654], [612, 665]];
const RIGHT_EDGE: Pt[] = [[270, 729], [310, 735], [353, 741], [397, 747], [438, 751], [480, 755], [530, 758], [590, 758], [612, 756]];
const THREADS = 17;

function edgeAt(table: Pt[], y: number) {
  for (let i = 1; i < table.length; i++) {
    if (y <= table[i][0]) {
      const [y0, x0] = table[i - 1];
      const [y1, x1] = table[i];
      return x0 + ((y - y0) / (y1 - y0)) * (x1 - x0);
    }
  }
  return table[table.length - 1][1];
}

// point on the front rim of thread k, s runs from the left silhouette to the right one
function rim(k: number, s: number, dy = 0): Pt {
  const ly = 290 + 19.7 * k;
  const ry = 276 + 20.3 * k;
  const lx = edgeAt(LEFT_EDGE, ly);
  const rx = edgeAt(RIGHT_EDGE, ry);
  const f = (1 - Math.cos(Math.PI * s)) / 2;
  return [lx + (rx - lx) * f, ly + (ry - ly) * f + 20 * Math.sin(Math.PI * s) + dy];
}

const join = (pts: Pt[]) => pts.map((p) => p.map((v) => v.toFixed(1)).join(",")).join(" ");

function strip(k: number, a: number, b: number, top: number, bottom: number, slant = 0) {
  const pts: Pt[] = [];
  for (let j = 0; j <= 8; j++) pts.push(rim(k, a + ((b - a) * j) / 8, bottom));
  for (let j = 8; j >= 0; j--) pts.push(rim(k, Math.min(0.97, Math.max(0.03, a + slant + ((b - a) * j) / 8)), top));
  return join(pts);
}

function outline(k: number, a: number, b: number, dy: number) {
  const pts: Pt[] = [];
  for (let j = 0; j <= 16; j++) pts.push(rim(k, a + ((b - a) * j) / 16, dy));
  return join(pts);
}

// the core runs just inside the silhouette, so only shallow notches show between threads
function corePoints() {
  const left: Pt[] = [];
  const right: Pt[] = [];
  for (let k = 0; k < THREADS; k++) {
    const [lx, ly] = rim(k, 0);
    const [rx, ry] = rim(k, 1);
    left.push([lx + 2.5, ly]);
    right.unshift([rx - 2.5, ry]);
  }
  return join([...left, ...right]);
}

const FACE: string[][] = [
  ["#16d890", "#12c6c4", "#1aa4d8", "#2478e8", "#2360e4", "#2078e2", "#18a2dc", "#10cdd0"],
  ["#14d4a0", "#16b8d4", "#208ce4", "#1f66e8", "#2048e6", "#1c62ea", "#1a8ee6", "#16c4dc"],
  ["#18b4d8", "#1c9ae0", "#207ce8", "#2060ea", "#1e3ae6", "#2050ea", "#1e78ea", "#1aa2e6"],
  ["#1c9ad8", "#1e8ae4", "#226eea", "#2050ea", "#1e28e4", "#1e38ea", "#205ee8", "#1e84e8"],
  ["#1e8cdc", "#2078e4", "#2262ea", "#2040ea", "#1e1ee8", "#1f28ea", "#2048ea", "#2070e8"],
  ["#2076e0", "#2264e8", "#204aea", "#2030ec", "#1c1cee", "#1e1eee", "#2034ee", "#2456ea"],
  ["#2068e4", "#2350ea", "#2034ec", "#2222f2", "#1e1ef0", "#2020f2", "#2222f6", "#263cee"],
  ["#2444ea", "#2428f0", "#2222f6", "#2a2afa", "#2020f2", "#2424f8", "#2222f6", "#2424f2"],
];
const SIDE: string[][] = [
  ["#189a60", "#1a86a0", "#1c5cb0", "#1f40b4", "#208ea4"],
  ["#1c8a96", "#2066b4", "#1f3cae", "#203cb4", "#1e84a4"],
  ["#206ea8", "#1f4ab0", "#1c2ea8", "#1d2eac", "#2060ac"],
  ["#2056a0", "#1f38a4", "#1b20a2", "#1b1ea6", "#204ca6"],
  ["#1f4aa0", "#1e30a0", "#1a1a9c", "#1a1a9e", "#1f389e"],
  ["#1f3c9c", "#1c2298", "#1a1896", "#1a1896", "#1d2a98"],
  ["#1d2a94", "#1b1a92", "#1a168e", "#1a168e", "#1c2094"],
  ["#1b1b90", "#1a168c", "#1a158a", "#1a158a", "#1b188e"],
];
const bucket = (k: number) => [0, 1, 2, 3, 3, 4, 4, 5, 5, 5, 6, 6, 7, 7, 7, 7, 7][k];

function Thread({ k }: { k: number }) {
  const face = FACE[bucket(k)];
  const side = SIDE[bucket(k)];
  const cuts = [0, 0.16, 0.27, 0.38, 0.5, 0.6, 0.73, 0.85, 1];
  const sideCuts = [0, 0.2, 0.4, 0.62, 0.84, 1];
  const wobble = (i: number) => Math.sin(k * 2.3 + i * 1.7) * 0.03;
  return (
    <g>
      {k > 0 && (
        <>
          <polygon points={strip(k, 0.1, 0.9, -24, -6)} fill={face[3]} />
          {face.map((c, i) => (
            <polygon
              key={i}
              points={strip(k, i === 0 ? 0 : cuts[i] + wobble(i), i === 7 ? 1 : cuts[i + 1] + wobble(i + 1) + 0.005, -21, -7, i === 0 || i === 7 ? 0 : i % 2 ? 0.07 : -0.03)}
              fill={c}
            />
          ))}
          <polygon points={strip(k, 0.43, 0.5, -17, -9, 0.06)} fill="#3346ec" opacity=".6" />
          <polygon points={strip(k, 0.2, 0.3, -17, -8, 0.1)} fill="#3c8cf4" opacity=".35" />
          <polygon points={strip(k, 0.72, 0.78, -17, -8, 0.07)} fill="#3c74fa" opacity=".4" />
        </>
      )}
      {side.map((c, i) => <polyline key={i} points={outline(k, sideCuts[i], sideCuts[i + 1], -4)} fill="none" stroke={c} strokeWidth="7.600" />)}
      <polyline points={outline(k, 0, 1, -8)} fill="none" stroke="#6b7590" strokeWidth=".6" />
      <polyline points={outline(k, 0, 1, 0)} fill="none" stroke="#4a5068" strokeWidth=".7" />
      <polyline points={outline(k, 0.3, 0.65, 0.8)} fill="none" stroke="#16163c" strokeWidth=".7" />
    </g>
  );
}

const FLUTE_LEFT = "711,505 697,512 692,525 692,535 700,535 694,545 696,553 705,553 698,564 699,573 708,573 702,583 703,593 712,592 706,602 707,612 714,611 716,624";
const FLUTE_RIGHT = "728,622 727,609 739,605 738,597 724,591 736,585 735,577 721,570 732,565 732,556 718,550 728,546 728,536 713,530 725,527 725,517 710,512";
const POCKETS: Pt[] = [[692, 535], [696, 553], [699, 573], [703, 593]];
const TIPS: Pt[] = [[713, 530], [718, 550], [721, 570], [724, 591]];

function Implant() {
  const ks = Array.from({ length: THREADS }, (_, i) => THREADS - 1 - i);
  return (
    <svg width="240" height="420" viewBox="539 220 240 420" className="absolute left-[300px] top-[89px]">
      <defs>
        <linearGradient id="core" x1="0" y1="0" x2="0" y2="1">
          <stop offset="0" stopColor="#1aa0c8" /><stop offset=".3" stopColor="#1e70e0" /><stop offset=".7" stopColor="#2030e0" /><stop offset="1" stopColor="#1c1cc8" />
        </linearGradient>
        <clipPath id="ring"><ellipse cx="653.500" cy="270" rx="76" ry="26" transform="rotate(-8 653.500 270)" /></clipPath>
        <clipPath id="bore"><ellipse cx="651.500" cy="269" rx="48.500" ry="18.500" transform="rotate(-3 651.500 269)" /></clipPath>
        {/* keeps the thick bands inside the outer silhouette */}
        <clipPath id="body"><path d="M577 240h153l6 70 6 43 6 44 4 41 4 42 3 50v60l-2 42h-95l-9-20-16-38-17-40-11-42-9-43-11-52-7-45z" /></clipPath>
      </defs>
      <path d="M664 604Q668 616 688 624t36 3q24-5 32-24z" fill="#17154a" stroke="#222" strokeWidth=".6" />
      <polygon points={corePoints()} fill="url(#core)" />
      <g clipPath="url(#body)">{ks.map((k) => <Thread key={k} k={k} />)}</g>
      <polygon points={`${FLUTE_LEFT} ${FLUTE_RIGHT}`} fill="#1b1785" stroke="#6a6f85" strokeWidth=".6" />
      {POCKETS.map(([x, y]) => (
        <g key={y}>
          <path d={`M${x + 9} ${y}l-17-1 8 4z`} fill="#14123a" />
          <path d={`M${x + 9} ${y - 1}l-8 11-9 1 3-9z`} fill="#2626e4" stroke="#6a6f85" strokeWidth=".4" />
        </g>
      ))}
      {TIPS.map(([x, y]) => <path key={y} d={`M${x} ${y}l13 6 6-9-8 0z`} fill="#2222dc" stroke="#6a6f85" strokeWidth=".4" />)}
      <path d="M674 313l5 35 9 42 8 50 8 62 5 30 7 45 6 45" fill="none" stroke="#77809a" strokeWidth=".7" />
      {[0, 1, 2, 3, 4, 5, 6].map((i) => <path key={i} d={`M${671 + i * 3.4} ${347 + i * 21}l5 3 6-3-5 6z`} fill="#2a55e0" stroke="#6d7596" strokeWidth=".4" />)}
      <path d="M729 261v14q-8 12-32 20l-12-8 30-12z" fill="#1f8c9c" stroke="#4f6672" strokeWidth=".6" />
      <g clipPath="url(#ring)">
        <path d="M570 230h170v85H570z" fill="#1aaede" />
        <path d="M606 250l16-12h70l8 10-30 4-60 8z" fill="#2450d6" />
        <path d="M612 247l16-6 4 12-20 6z" fill="#2472e4" /><path d="M596 255l22-9-6 17-28 10z" fill="#16b4d4" />
        <path d="M570 290l8-18 20-17 10 4-12 12 10 10-18 18-18 5z" fill="#12d884" />
        <path d="M574 296l4-20 14-14 9 3-6 17 4 14-18 7z" fill="#14dc28" />
        <path d="M575 280l22-3-10 6 15 8-19 3z" fill="#5ce41c" /><path d="M576 282l12 0-5 3 13 5-14-1z" fill="#d8e01c" /><path d="M576 283h8l-3 2z" fill="#f45a12" />
        <path d="M592 302l24-14 20 6 30 14h-70z" fill="#18b0d8" /><path d="M614 288l22 2-6 14-24-7z" fill="#2290e6" />
        <path d="M632 290l40-6 16 4-34 22-28-5z" fill="#2468e6" /><path d="M645 293l38-8 8 6-28 11z" fill="#2048dc" />
        <path d="M690 278l20-16 14-2-20 30-30 6z" fill="#1c88e4" /><path d="M704 270l30-16v30l-42 14z" fill="#16bed8" />
        <path d="M678 240l36 4 20 16-16 5-32-15z" fill="#14d68c" /><path d="M680 243l22 2 18 9 4 7-14 2-22-12z" fill="#24dc1c" />
        <path d="M690 246l16 2 12 7-4 4-11-2z" fill="#d8e41a" /><path d="M705 253l6-1 4 3-5 1z" fill="#f04a1a" />
      </g>
      <ellipse cx="653.500" cy="270" rx="76" ry="26" transform="rotate(-8 653.500 270)" fill="none" stroke="#4f6672" strokeWidth=".8" />
      <g clipPath="url(#bore)">
        <path d="M600 245h105v50H600z" fill="#1c3caa" /><path d="M600 250l16-3 6 42h-22z" fill="#2066a0" />
        <path d="M616 248l10-2 2 45-9-3z" fill="#2052ae" /><path d="M640 246h16l-2 44h-14z" fill="#1c309e" />
        <path d="M656 246l14 0 8 42-22 4z" fill="#225aa8" /><path d="M668 246l40 6-8 38-24 0z" fill="#1f8c80" /><path d="M686 250l20 4v22l-18 12z" fill="#1f8f62" />
      </g>
      <ellipse cx="651.500" cy="269" rx="48.500" ry="18.500" transform="rotate(-3 651.500 269)" fill="none" stroke="#46566a" strokeWidth=".8" />
      <path d="M583 284l20-6M673 244q30 6 52 18" fill="none" stroke="#476" strokeWidth=".7" />
      <path d="M645 268l-6-22" stroke="#1a2a9c" strokeWidth="2" /><path d="M637 238l4 10h-4z" fill="#1a2a9c" />
      <path d="M648 269l22-5" stroke="#1d8a2a" strokeWidth="1.500" /><path d="M664 263l13-2-11 6z" fill="#1d8a2a" />
      <path d="M647 273l7 10" stroke="#d3202a" strokeWidth="3.200" />
      <circle cx="645" cy="268.500" r="4.500" fill="#2b9be8" stroke="#0b57b4" /><path d="M641 268h8M645 264v9" stroke="#bfe4ff" strokeWidth=".7" />
      <text x="639" y="235.500" className="font-['Liberation_Sans'] text-[8.500px]" fill="#4a4a9e">ZC</text>
      <text x="642" y="292" className="font-['Liberation_Sans'] text-[8px]" fill="#c22a50">XC</text>
    </svg>
  );
}

function Triad() {
  return (
    <svg width="90" height="90" viewBox="1154 540 90 90" className="absolute left-[915px] top-[409px]">
      <path d="M1165 587l26-8 8 6 7 28-27 8-7-11zM1165 587l9 10 25-8M1174 597l5 24" fill="none" stroke="#b9b9b9" strokeWidth=".8" />
      <path d="M1182 588l-4-20" stroke="#1838c0" strokeWidth="3.200" /><path d="M1176 557l6 13-8 2z" fill="#1838c0" />
      <path d="M1202 595l20-5" stroke="#279a34" strokeWidth="3" /><path d="M1230 587l-14 1 3 7z" fill="#279a34" />
      <path d="M1189 605l6 7" stroke="#d3202a" strokeWidth="3.500" /><path d="M1191 612l7-5 1 10z" fill="#c81a24" />
      <g className="font-['Liberation_Sans'] text-[8px]">
        <text x="1172" y="554" fill="#4448b8">Z</text><text x="1234" y="587" fill="#666">Y</text><text x="1198" y="622" fill="#c03038">X</text>
      </g>
    </svg>
  );
}

function RotateCursor() {
  return (
    <svg width="22" height="20" viewBox="0 0 22 20" className="absolute left-[303px] top-[298px]">
      <path d="M4 6q3-5 9-4 6 2 6 8M18 13q-3 5-9 4-5-1-6-6" fill="none" stroke="#444" strokeWidth="1.500" />
      <path d="M1 10q4-5 10-5t9 5q-3 4-9 4-7 0-10-4z" fill="none" stroke="#555" strokeWidth="1.200" />
      <circle cx="11" cy="9.500" r="4" fill="#ccc" stroke="#444" /><path d="M11 6.500v6M8 9.500h6" stroke="#555" />
      <path d="M0 8l5 4 0-5z" fill="#333" /><path d="M21 11l-5-1 4-3z" fill="#333" />
    </svg>
  );
}

const RESULT_TEXT = [
  "sim2 : Horizontal Result", "Subcase - Statics 1, Static Step 1", "Stress - Elemental, Averaged, Von-Mises",
  "Min : 0.03, Max : 77.23, Units = MPa", "CSYS : Absolute Rectangular", "Deformation : Displacement - Nodal Magnitude",
];

function Viewport() {
  return (
    <div className="flex w-[1018px] shrink-0 flex-col">
      <div className="flex h-[17px] items-stretch border-b border-[#4a4a4a] bg-[#e8e8e8] text-[7.900px] text-[#333]">
        <div className="flex w-[93px] items-center gap-[2px] pl-[5px] pt-px">
          <Svg s={11}><path d="M1 5l7-3v14l-7 3z" fill="#b5243a" stroke="#445" /><path d="M9 3h6v14M16 3h6v16h-6" stroke="#445" strokeWidth="2" /><path d="M5 13l8 8" stroke="#c33" strokeWidth="3" /></Svg>
          <span>Discovery Center</span>
        </div>
        <div className="flex w-[118px] items-center bg-[#555] pl-[4px] pt-px text-[#f2f2f2]">
          <Svg s={11}><path d="M2 3h6v17H2z" fill="#7b1fa2" /><path d="M5 10h7v10H5z" fill="#e53935" /><path d="M9 2h7v19H9z" fill="#fdd835" /><path d="M14 8h8v8h-8z" fill="#fdd835" /></Svg>
          <span className="ml-[2px] w-[81px] whitespace-nowrap text-[7.700px]">(Simulation) sim2.sim</span>
          <Svg s={8}><path d="M3 3h11v5M3 3v18h14v-8M12 10h10M18 6l4 4-4 4" stroke="#fff" strokeWidth="2.500" /></Svg>
          <span className="ml-[2px]"><Svg s={7}><path d="M3 3l18 18M21 3 3 21" stroke="#fff" strokeWidth="4.500" /></Svg></span>
        </div>
      </div>
      <div className="relative flex flex-1 flex-col border-l border-r border-[#999] bg-white font-['Liberation_Sans'] text-[#43454f]">
        <div className="pl-[11px] pt-[7px] text-[10.300px] leading-[11.860px]">
          {RESULT_TEXT.map((t) => <div key={t}>{t}</div>)}
        </div>
        <div className="ml-[11px] mt-[25px] flex">
          <div className="mt-[6px] flex flex-col gap-px">
            {RAINBOW.map((c) => <div key={c} className="h-[30.580px] w-[20px]" style={{ backgroundColor: c }} />)}
          </div>
          <div className="flex flex-col pl-[8px] text-[11px] leading-[13px]">
            {LEVELS.map((v) => <div key={v} className="h-[31.570px]">{v}</div>)}
          </div>
        </div>
        <div className="ml-[11px] text-[10.800px] leading-[13px]">[MPa]</div>
        <Implant />
        <Triad />
        <RotateCursor />
      </div>
    </div>
  );
}

function RightBar() {
  const icons = [
    <EditPost s={17} />, <Contour s={18} />, <ReturnHome s={17} />, <HideSwap />, <HideEye />,
    <Panels />, <CirclePlay size={17} strokeWidth={1.2} color="#555" />, <OrangeTool />, <FitWindow />, <StarBadge />,
  ];
  return (
    <div className="flex flex-1 flex-col items-center bg-[#d6d6d6] pt-[5px]">
      {icons.map((icon, i) => <div key={i} className="flex h-[21.400px] w-full shrink-0 items-center justify-center">{icon}</div>)}
      <div className="mt-px h-px w-[8px] bg-[#aaa]" />
      <svg width="4" height="5" viewBox="0 0 4 5" className="mb-[2px] ml-[-10px] mt-auto"><path d="M4 0v5L0 2.500z" fill="#111" /></svg>
    </div>
  );
}

/* ---------- windows taskbar ---------- */

function TaskIcon({ className, on, children }: { className: string; on?: boolean; children: ReactNode }) {
  return (
    <div className={clsx("flex h-[28px] flex-col items-center pt-[5px]", className)}>
      <div className="flex h-[17px] items-center">{children}</div>
      {on && <div className="mt-[2px] h-[2px] w-[4px] shrink-0 bg-[#888]" />}
    </div>
  );
}

function Taskbar() {
  return (
    <div className="flex h-[31px] items-center border-t border-[#c4c4c4] bg-[#dcdcdc] pb-px text-[7.900px] text-[#333]">
      <div className="flex w-[440px] items-center pl-[15px]">
        <div className="relative h-[18px] w-[16px]">
          <Svg s={16}><circle cx="14" cy="10" r="7" fill="#f6a81c" /><path d="M2 19q0-5 6-5 3-5 8-2 6 0 6 5 0 3-3 3H4z" fill="#f1f4f8" stroke="#b7c3d4" /></Svg>
          <span className="absolute left-[5px] top-[-3px] flex h-[10px] w-[10px] items-center justify-center rounded-full bg-[#c8321e] text-[7px] text-white">3</span>
        </div>
        <div className="pl-[2px] leading-[10.500px]"><div>90°F</div><div className="text-[#666]">Partly cloudy</div></div>
      </div>
      <div className="flex w-[26px] justify-start">
        <svg width="17" height="17" viewBox="0 0 17 17"><path d="M0 0h8v8H0zM9 0h8v8H9zM0 9h8v8H0zM9 9h8v8H9z" fill="#1a8fdc" /></svg>
      </div>
      <div className="flex h-[21px] w-[144px] items-center rounded-full bg-[#f4f4f4] pl-[7px] pr-[3px]">
        <Search size={10} strokeWidth={2.600} />
        <span className="ml-[6px] text-[8.700px] text-[#666]">Search</span>
        <svg width="32" height="17" viewBox="0 0 32 17" className="ml-auto">
          <path d="M1 11q4-7 9-6 8-6 13 1 6 1 8 6-5 4-15 4T1 11z" fill="#4d8f3c" /><path d="M14 7q8-4 14 4l-6 2z" fill="#3f7bc8" />
          <path d="M3 12q8-3 14 0t13-1q-4 5-14 5T3 12z" fill="#a8552e" /><path d="M11 4l2 3h5l2 3-1 4M13 7l-2 3v4M13 6l2-4" stroke="#e6a368" strokeWidth="1.500" fill="none" />
        </svg>
      </div>
      <TaskIcon className="w-[31px]"><Svg s={14}><path d="M6 1h17v16H6z" fill="#f5f5f5" /><path d="M1 6h6v11h11v6H1z" fill="#222" /></Svg></TaskIcon>
      <TaskIcon className="w-[30px]" on><Svg s={17}><path d="M1 3h8l2 3h12v15H1z" fill="#f9c232" /><path d="M1 9h22v8H1z" fill="#ffd95c" /><path d="M4 15h16v6H4z" fill="#2b7fd0" /></Svg></TaskIcon>
      <TaskIcon className="w-[30px]" on><Svg s={17}><path d="M3 2h14v6H3z" fill="#222" /><path d="M8 6h8l-2 16H9z" fill="#343434" /><path d="M12 8l9-2v9l-9 2z" fill="#7c8f4a" stroke="#222" /></Svg></TaskIcon>
      <TaskIcon className="w-[28px]"><Svg s={17}><path d="M8 2h14v12H8z" fill="#1c79d2" /><path d="M9 11h14v10H9z" fill="#38a4ec" /><path d="M0 7h12v12H0z" fill="#0f5fb4" /><circle cx="6" cy="13" r="3" stroke="#fff" strokeWidth="2" /></Svg></TaskIcon>
      <TaskIcon className="w-[30px]">
        <Svg s={17}>
          <path d="M3 1h18v22H3z" fill="#54697c" /><path d="M5 3h14v5H5z" fill="#7cc8f0" />
          <path d="M5 10h4v3H5zM10 10h4v3h-4zM5 14h4v3H5zM10 14h4v3h-4zM5 18h4v3H5zM10 18h4v3h-4zM15 10h4v3h-4z" fill="#e6edf2" /><path d="M15 14h4v7h-4z" fill="#2d8fd8" />
        </Svg>
      </TaskIcon>
      <TaskIcon className="w-[29px]" on><Svg s={17}><path d="M4 2h16v18H4z" fill="#3fb4dc" /><path d="M7 6h10M7 10h10M7 14h10" stroke="#0d5d82" strokeWidth="1.500" /><path d="M3 20h18v2H3z" fill="#b5502e" /><path d="M5 1h14" stroke="#246" strokeWidth="2" strokeDasharray="1.500 1.500" /></Svg></TaskIcon>
      <TaskIcon className="w-[30px]" on>
        <svg width="16" height="16" viewBox="0 0 16 16">
          <rect width="16" height="16" rx="3.500" fill="#06b816" /><ellipse cx="8" cy="7.300" rx="5.800" ry="4.600" fill="#fff" /><path d="M6 11l2 3 2-3z" fill="#fff" />
          <text x="3.700" y="8.700" className="font-['Liberation_Sans'] text-[3.600px] font-bold" fill="#06b816">LINE</text>
        </svg>
      </TaskIcon>
      <div className="flex h-[25px] w-[26px] flex-col items-center rounded-[2px] bg-[#eee] pt-[3px]">
        <NxLogo s={17} />
        <div className="mt-[2px] h-[2px] w-[10px] bg-[#2874c4]" />
      </div>
      <div className="ml-auto flex items-center">
        <div className="flex w-[22px] justify-center"><ChevronUp size={9} /></div>
        <div className="flex w-[22px] justify-center"><CloudOff size={10} strokeWidth={2} /></div>
        <span className="w-[28px] text-center">ENG</span>
        <div className="ml-[5px] flex w-[14px] justify-center"><Wifi size={11} strokeWidth={2} /></div>
        <div className="flex w-[16px] justify-center"><Volume2 size={10} strokeWidth={1.800} /></div>
        <div className="flex w-[18px] justify-center"><BatteryCharging size={12} strokeWidth={2} fill="#555" /></div>
        <div className="w-[45px] text-right leading-[10.500px]"><div>6:59 PM</div><div>3/19/2025</div></div>
        <div className="w-[13px]" />
      </div>
    </div>
  );
}

export default function App() {
  return (
    <div className="flex h-[720px] w-[1280px] flex-col overflow-hidden bg-[#d6d6d6] font-['Open_Sans','Noto_Sans',sans-serif] leading-normal [text-rendering:geometricPrecision]">
      <TitleBar />
      <RibbonTabs />
      <Ribbon />
      <SelectionBar />
      <div className="flex h-[558px] shrink-0 overflow-hidden">
        <ResourceBar />
        <Navigator />
        <Viewport />
        <RightBar />
      </div>
      <div className="flex h-[17px] shrink-0 items-center border-t border-[#eee] bg-[#d4d4d4] text-[7.800px] font-bold tracking-[-0.16px] text-[#111]">
        <span className="w-[622px] pl-[2px]">Drag cursor to rotate view about X-Y</span>
        <span>Rotating view about X-Y</span>
        <div className="ml-auto h-full w-[28px] border-x border-[#c2c2c2]" />
        <div className="w-[12px]" />
      </div>
      <Taskbar />
    </div>
  );
}
